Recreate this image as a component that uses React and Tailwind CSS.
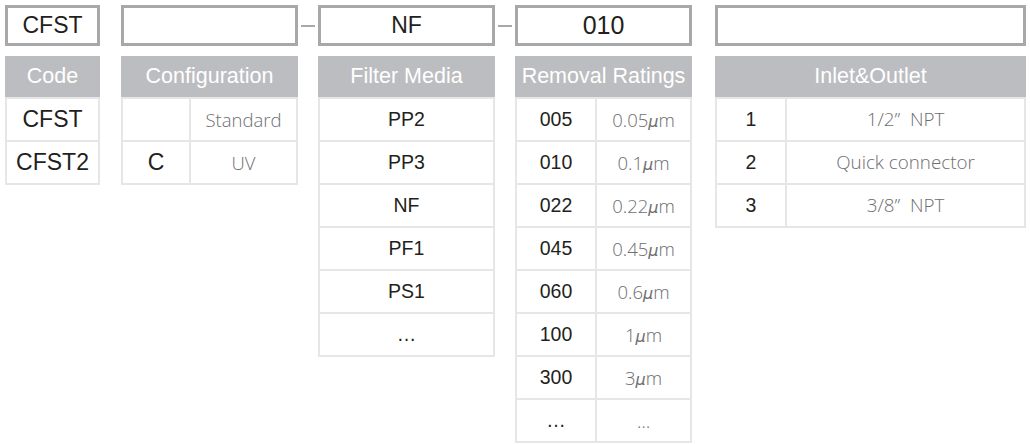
import React from "react";

const arial = "font-['Liberation_Sans',Arial,sans-serif]";
const segoe = "font-['Open_Sans',sans-serif] font-light";

function TopBox({ children, w, big }) {
  return (
    <div
      className={`${w} h-[41px] border-[3px] border-[#a7a8aa] flex items-center justify-center text-[#231f20] ${arial} ${big ? "text-[25px]" : "text-[23px]"}`}
    >
      {children}
    </div>
  );
}

function Header({ children }) {
  return (
    <div className={`h-[41px] bg-[#bcbdc0] text-white flex items-center justify-center text-[21.5px] ${arial} mt-[10px]`}>
      {children}
    </div>
  );
}

function Body({ children }) {
  return <div className="bg-[#e6e6e6] p-[2px] flex flex-col gap-[2px]">{children}</div>;
}

function Row({ children }) {
  return <div className="flex gap-[2px] h-[41px]">{children}</div>;
}

function Cell({ children, className = "" }) {
  return <div className={`bg-white flex items-center justify-center ${className}`}>{children}</div>;
}

function Dash() {
  return (
    <div className="w-[20px] h-[41px] flex items-center justify-center">
      <div className="w-[14px] h-[2px] bg-[#a7a8aa]" />
    </div>
  );
}

const Mu = ({ v }) => (
  <span>
    {v}
    <i className="font-['DejaVu_Sans',sans-serif] font-light text-[16px]">μ</i>m
  </span>
);

export default function App() {
  const dark = `text-[#231f20] ${arial}`;
  const light = `text-[#6d6e71] ${segoe}`;
  const removal = [
    ["005", "0.05"],
    ["010", "0.1"],
    ["022", "0.22"],
    ["045", "0.45"],
    ["060", "0.6"],
    ["100", "1"],
    ["300", "3"],
  ];
  return (
    <div className="w-[1030px] h-[444px] bg-white flex items-start pl-[5px] pt-[5px]">
      {/* Code */}
      <div className="w-[95px] flex flex-col">
        <TopBox w="w-[95px]">CFST</TopBox>
        <Header>Code</Header>
        <Body>
          <Row>
            <Cell className={`flex-1 text-[23px] ${dark}`}>CFST</Cell>
          </Row>
          <Row>
            <Cell className={`flex-1 text-[23px] ${dark}`}>CFST2</Cell>
          </Row>
        </Body>
      </div>

      <div className="w-[21px]" />

      {/* Configuration */}
      <div className="w-[177px] flex flex-col">
        <TopBox w="w-[177px]" />
        <Header>Configuration</Header>
        <Body>
          <Row>
            <Cell className={`w-[66px] text-[23px] ${dark}`} />
            <Cell className={`flex-1 text-[18.5px] ${light}`}>Standard</Cell>
          </Row>
          <Row>
            <Cell className={`w-[66px] text-[23px] ${dark}`}>C</Cell>
            <Cell className={`flex-1 text-[18.5px] ${light}`}>UV</Cell>
          </Row>
        </Body>
      </div>

      <Dash />

      {/* Filter Media */}
      <div className="w-[177px] flex flex-col">
        <TopBox w="w-[177px]">NF</TopBox>
        <Header>Filter Media</Header>
        <Body>
          {["PP2", "PP3", "NF", "PF1", "PS1", "…"].map((t) => (
            <Row key={t}>
              <Cell className={`flex-1 text-[19.5px] ${dark}`}>{t}</Cell>
            </Row>
          ))}
        </Body>
      </div>

      <Dash />

      {/* Removal Ratings */}
      <div className="w-[177px] flex flex-col">
        <TopBox w="w-[177px]" big>
          010
        </TopBox>
        <Header>Removal Ratings</Header>
        <Body>
          {removal.map(([c, v]) => (
            <Row key={c}>
              <Cell className={`w-[78px] text-[19.5px] ${dark}`}>{c}</Cell>
              <Cell className={`flex-1 text-[18.5px] ${light}`}>
                <Mu v={v} />
              </Cell>
            </Row>
          ))}
          <Row>
            <Cell className={`w-[78px] text-[19.5px] ${dark}`}>…</Cell>
            <Cell className={`flex-1 text-[18.5px] ${light}`}>…</Cell>
          </Row>
        </Body>
      </div>

      <div className="w-[23px]" />

      {/* Inlet & Outlet */}
      <div className="w-[311px] flex flex-col">
        <TopBox w="w-[311px]" />
        <Header>Inlet&amp;Outlet</Header>
        <Body>
          {[
            ["1", "1/2\u201D  NPT"],
            ["2", "Quick connector"],
            ["3", "3/8\u201D  NPT"],
          ].map(([n, t]) => (
            <Row key={n}>
              <Cell className={`w-[68px] text-[19.5px] ${dark}`}>{n}</Cell>
              <Cell className={`flex-1 text-[18.8px] whitespace-pre ${light}`}>{t}</Cell>
            </Row>
          ))}
        </Body>
      </div>
    </div>
  );
}
